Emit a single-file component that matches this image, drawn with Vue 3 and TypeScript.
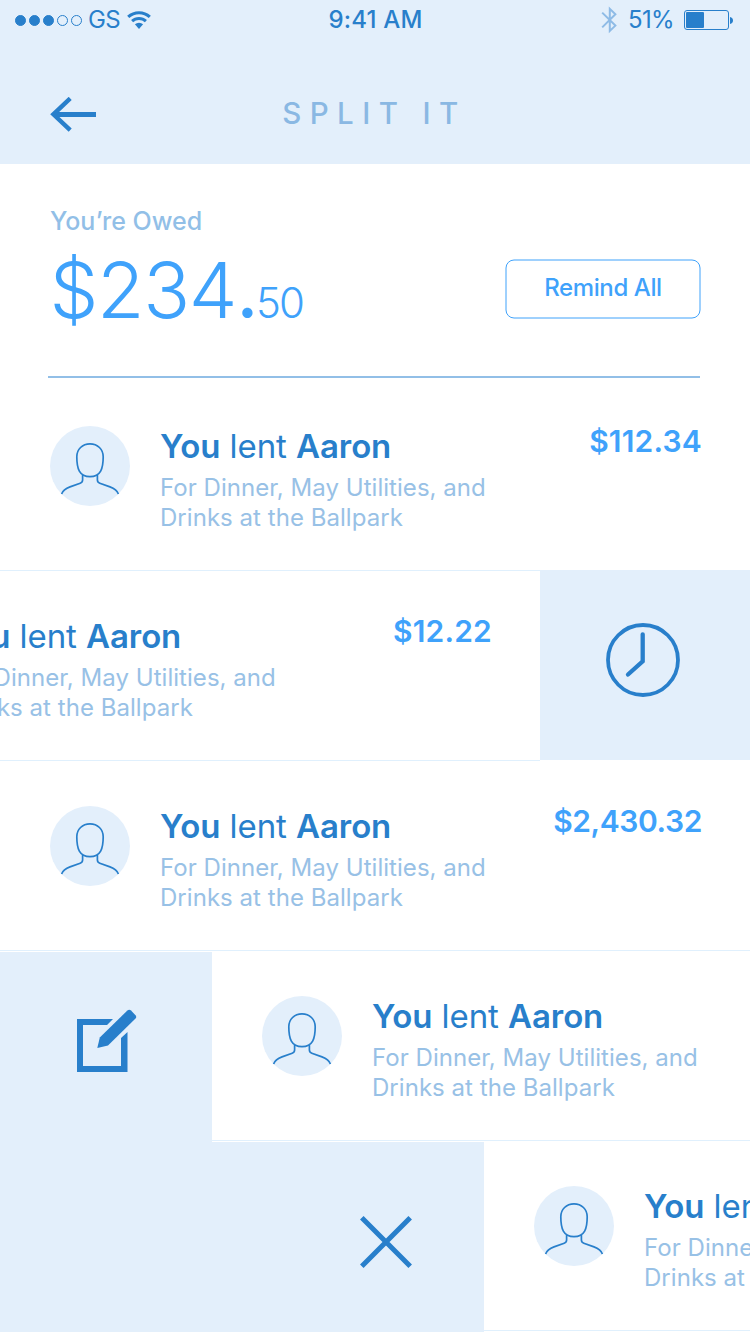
<script setup lang="ts">
interface Loan {
  id: number
  amount: string
  swipe: 'none' | 'later' | 'edit' | 'remove'
}

const loans: Loan[] = [
  { id: 1, amount: '$112.34', swipe: 'none' },
  { id: 2, amount: '$12.22', swipe: 'later' },
  { id: 3, amount: '$2,430.32', swipe: 'none' },
  { id: 4, amount: '', swipe: 'edit' },
  { id: 5, amount: '', swipe: 'remove' },
]
</script>

<template>
  <div class="screen">
    <header class="header">
      <div class="status">
        <div class="status-left">
          <span class="dots"><i class="on"></i><i class="on"></i><i class="on"></i><i></i><i></i></span>
          <span class="carrier">GS</span>
          <svg class="wifi" width="24" height="19" viewBox="0 0 24 19" fill="none">
            <path d="M1.2 6.95 A15.9 15.9 0 0 1 22.8 6.95" stroke="#287fcb" stroke-width="3.1" />
            <path d="M5.1 11.2 A10.1 10.1 0 0 1 18.9 11.2" stroke="#287fcb" stroke-width="3" />
            <path d="M12 18.9 L7.9 14.2 A6.2 6.2 0 0 1 16.1 14.2 Z" fill="#287fcb" />
          </svg>
        </div>
        <span class="time">9:41 AM</span>
        <div class="status-right">
          <svg width="17" height="28" viewBox="0 0 17 28" fill="none">
            <path d="M2.2 6.6 L15.4 19.6 L9.8 25 V2.8 L15.4 8.2 L2.2 21.4" stroke="#8ebbe6" stroke-width="2" />
          </svg>
          <span class="percent">51%</span>
          <svg width="50" height="20" viewBox="0 0 50 20">
            <rect x=".5" y=".5" width="44" height="19" rx="2.5" fill="none" stroke="#287fcb" />
            <rect x="2" y="2" width="18" height="16" rx="1" fill="#287fcb" />
            <path d="M46 7 C50 7.4 50 13.6 46 14 Z" fill="#287fcb" />
          </svg>
        </div>
      </div>
      <div class="nav">
        <svg class="back" width="48" height="36" viewBox="0 0 48 36" fill="none" stroke="#287fcb">
          <path d="M20.2 2.4 L3.4 18.3 L20.2 34.2" stroke-width="4.4" transform="translate(0 -1)" />
          <path d="M4 17.4 H46" stroke-width="5" />
        </svg>
        <h1>SPLIT IT</h1>
      </div>
    </header>

    <section class="summary">
      <div class="label">You’re Owed</div>
      <div class="total-row">
        <div class="total"><span class="whole">$234<span class="point">.</span></span><span class="cents">50</span></div>
        <button class="remind">
          <svg class="outline" width="196" height="60" viewBox="0 0 196 60">
            <rect x="1" y="1" width="194" height="58" rx="8" fill="none" stroke="#3fa2fb" />
          </svg>
          <span>Remind All</span>
        </button>
      </div>
      <div class="rule"></div>
    </section>

    <main>
      <div v-for="loan in loans" :key="loan.id" class="row" :class="loan.swipe">
        <div v-if="loan.swipe === 'edit'" class="action">
          <svg width="62" height="64" viewBox="0 0 62 64" fill="#287fcb">
            <path d="M1 10 H37 L31 16 H7 V57 H45 V29 L51.5 23 V63 H1 Z" />
            <path d="M21.3 39 L23.8 28.4 L51.4 1.5 Q53.2 0 55 1.5 L59.5 6.2 Q61 8 59.5 9.6 L32 36.6 Z" />
          </svg>
        </div>
        <div v-if="loan.swipe === 'remove'" class="action">
          <svg width="54" height="54" viewBox="0 0 54 54" stroke="#287fcb" stroke-width="5">
            <path d="M2.8 2.8 L51.2 51.2 M51.2 2.8 L2.8 51.2" />
          </svg>
        </div>

        <article class="item">
          <svg class="avatar" width="80" height="80" viewBox="0 0 80 80" fill="none">
            <circle cx="40" cy="40" r="40" fill="#e3effb" />
            <g stroke="#287fcb" stroke-width="1.7">
              <path d="M40 17.9 C47.6 17.9 53.2 23.2 53.2 30.8 C53.2 42.5 50.8 50.7 40 50.7 C29.2 50.7 26.8 42.5 26.8 30.8 C26.8 23.2 32.4 17.9 40 17.9 Z" />
              <path d="M32.6 49 V54 Q32.6 56.3 30.2 57.2 L20 60.9 Q13.3 63.4 11.6 68" />
              <path d="M47.4 49 V54 Q47.4 56.3 49.8 57.2 L60 60.9 Q66.7 63.4 68.4 68" />
            </g>
          </svg>
          <div class="text">
            <h2><b>You</b> lent <b>Aaron</b></h2>
            <p>For Dinner, May Utilities, and<br />Drinks at the Ballpark</p>
          </div>
          <div v-if="loan.amount" class="amount" :class="{ long: loan.amount.length > 8 }">{{ loan.amount }}</div>
        </article>

        <div v-if="loan.swipe === 'later'" class="action">
          <svg width="76" height="76" viewBox="0 0 76 76" fill="none" stroke="#287fcb">
            <circle cx="38" cy="38" r="35" stroke-width="3.8" />
            <path d="M37.7 12.3 V39.3 L23 52.5" stroke-width="4.3" stroke-linecap="round" />
          </svg>
        </div>
      </div>
    </main>
  </div>
</template>

<style>
body {
  background: #fff;
}
</style>

<style scoped>
.screen {
  width: 750px;
  height: 1334px;
  overflow: hidden;
  background: #fff;
  color: #287fcb;
  font-family: Inter, "Liberation Sans", sans-serif;
  white-space: nowrap;
}
.header {
  height: 164px;
  background: #e3effb;
}
.status {
  display: grid;
  grid-template-columns: 1fr auto 1fr;
  height: 40px;
  padding: 0 16px 0 15px;
  align-items: center;
  font-size: 24px;
  line-height: 40px;
}
.status-left,
.status-right {
  display: flex;
  align-items: center;
}
.status-right {
  justify-content: flex-end;
}
.dots {
  display: flex;
  gap: 3px;
  margin-top: 1px;
}
.dots i {
  box-sizing: border-box;
  width: 11px;
  height: 11px;
  border: 1px solid #287fcb;
  border-radius: 50%;
}
.dots .on {
  background: #287fcb;
}
.carrier {
  margin-left: 6px;
  width: 32px;
  letter-spacing: -0.7px;
}
.wifi {
  margin: 0 0 2px 7px;
}
.time {
  padding-left: 2px;
  font-weight: 500;
  letter-spacing: 0.2px;
}
.percent {
  width: 45px;
  margin: 0 11px 0 11px;
  letter-spacing: -0.7px;
}
.nav {
  display: grid;
  grid-template-columns: 1fr auto 1fr;
  align-items: center;
  height: 36px;
  padding: 0 50px;
  margin-top: 57px;
}
.nav h1 {
  margin: -4px 0 0 -1px;
  font-size: 29.5px;
  font-weight: 500;
  line-height: 36px;
  letter-spacing: 8.4px;
  color: #8ab8e3;
}
.summary {
  height: 217px;
  padding: 39px 50px 0 48px;
  box-sizing: border-box;
}
.label {
  margin-left: 2px;
  font-size: 25px;
  line-height: 36px;
  font-weight: 500;
  color: #92bfe7;
}
.total-row {
  display: flex;
  justify-content: space-between;
  height: 100px;
  color: #3fa2fb;
}
.total {
  margin: 1px 0 0 1.5px;
  line-height: 100px;
}
.whole {
  font-size: 77.5px;
  font-weight: 340;
  letter-spacing: -1.4px;
}
.point {
  font-weight: 420;
  letter-spacing: -2.5px;
}
.cents {
  font-size: 42px;
  font-weight: 320;
  letter-spacing: -2px;
}
.remind {
  position: relative;
  width: 196px;
  height: 60px;
  margin: 20px -1px 0 0;
  padding: 0;
  border: 0;
  background: none;
  color: #3fa2fb;
  font: 500 24px/58px Inter, "Liberation Sans", sans-serif;
  letter-spacing: -0.4px;
}
.remind span {
  display: block;
  height: 60px;
}
.outline {
  position: absolute;
  inset: 0;
}
.rule {
  height: 2px;
  margin-top: 37px;
  background: #92bfe7;
}
.row {
  display: flex;
  height: 190px;
}
.row.later {
  margin-left: -210px;
}
.item {
  display: flex;
  flex: 0 0 750px;
  box-sizing: border-box;
  height: 190px;
  padding: 45px 49px 0 50px;
  border-bottom: 1px solid #e0f0fd;
}
.avatar {
  flex: none;
}
.text {
  flex: 1;
  margin-left: 30px;
}
.text h2 {
  margin: 0;
  font-size: 33px;
  line-height: 40px;
  font-weight: 400;
  letter-spacing: -0.05px;
}
.text b {
  font-weight: 600;
  letter-spacing: -0.1px;
}
.text p {
  margin: 7px 0 0;
  font-size: 24px;
  line-height: 30px;
  letter-spacing: 0.04px;
  color: #98c1e6;
}
.amount {
  margin: -3px -1px 0 0;
  font-size: 30px;
  line-height: 36px;
  font-weight: 600;
  letter-spacing: 0.2px;
  color: #3fa2fb;
}
.amount.long {
  letter-spacing: -0.4px;
}
.action {
  display: flex;
  flex: none;
  box-sizing: border-box;
  height: 190px;
  background: #e3effb;
}
.later .action {
  width: 210px;
  margin-top: -1px;
  padding: 52px 0 0 65px;
}
.edit .action,
.remove .action {
  margin-top: 1px;
}
.edit .action {
  width: 212px;
  padding: 57px 0 0 76px;
}
.remove .action {
  width: 484px;
  padding: 73px 0 0 359px;
}
</style>
